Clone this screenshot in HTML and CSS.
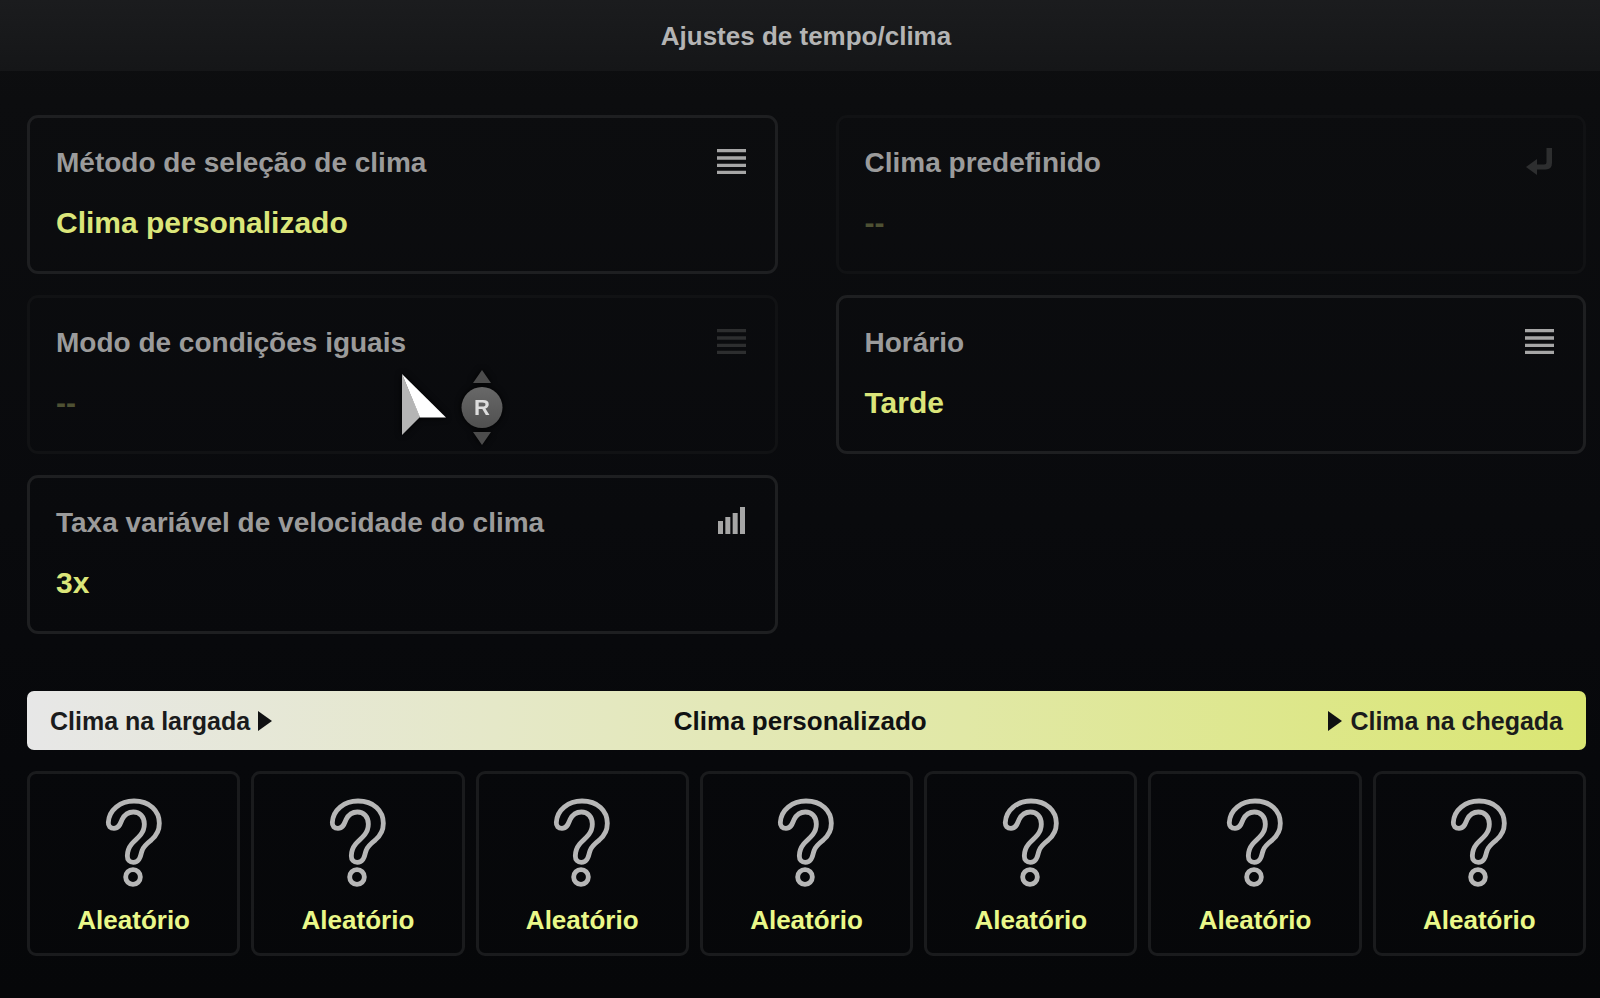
FILE: index.html
```html
<!DOCTYPE html>
<html lang="pt-BR">
<head>
<meta charset="utf-8">
<title>Ajustes de tempo/clima</title>
<link rel="stylesheet" href="styles.css">
</head>
<body>
<svg class="symbols" aria-hidden="true">
  <symbol id="list" viewBox="0 0 96 96"><path d="M3 6h87v10H3zM3 28h87v10H3zM3 50h87v10H3zM3 71h87v10H3z" fill="currentColor"/></symbol>
  <symbol id="bars" viewBox="0 0 96 96"><path d="M6 42h15v39H6zM28 30h15v51H28zM50 18h15v63H50zM72 0h15v81H72z" fill="currentColor"/></symbol>
  <symbol id="return" viewBox="0 0 32 32"><path d="M2 20L13 12v5.500h7q2.500 0 2.500-2.500V1H28v15q0 6.500-6.500 6.500H13V28z" fill="currentColor"/></symbol>
  <symbol id="question" viewBox="0 0 174 270">
    <g fill="none" stroke="currentColor" stroke-width="14.500">
      <path d="M10 73C12 36 45 9 87 9C134 9 163 38 163 76C163 98 156 112 139 126C125 137 117 143 112 156C107 168 108 176 102 184C97 191 91 193 85 193C74 193 67 186 67 174C67 160 71 149 80 138C90 126 99 121 107 110C115 100 118 90 118 78C118 56 104 42 85 42C67 42 58 51 51 65C46 76 43 91 27 91C16 91 9 84 10 73Z"/>
      <circle cx="84" cy="237" r="22"/>
    </g>
  </symbol>
  <symbol id="play" viewBox="0 0 14 20"><path d="M0 0L14 10L0 20z" fill="currentColor"/></symbol>
</svg>

<header class="header"><h1 class="title">Ajustes de tempo/clima</h1></header>

<main class="content">
  <section class="settings">
    <button class="card" type="button">
      <span class="label">Método de seleção de clima</span>
      <svg class="icon"><use href="#list"/></svg>
      <span class="value">Clima personalizado</span>
    </button>
    <button class="card" type="button" disabled>
      <span class="label">Clima predefinido</span>
      <svg class="icon"><use href="#return"/></svg>
      <span class="value">--</span>
    </button>
    <button class="card" type="button" disabled>
      <span class="label">Modo de condições iguais</span>
      <svg class="icon"><use href="#list"/></svg>
      <span class="value">--</span>
    </button>
    <button class="card" type="button">
      <span class="label">Horário</span>
      <svg class="icon"><use href="#list"/></svg>
      <span class="value">Tarde</span>
    </button>
    <button class="card" type="button">
      <span class="label">Taxa variável de velocidade do clima</span>
      <svg class="icon"><use href="#bars"/></svg>
      <span class="value">3x</span>
    </button>
  </section>

  <section class="forecast">
    <div class="timeline">
      <span class="edge">Clima na largada <svg class="play"><use href="#play"/></svg></span>
      <h2 class="timeline-title">Clima personalizado</h2>
      <span class="edge"><svg class="play"><use href="#play"/></svg> Clima na chegada</span>
    </div>
    <div class="slots">
      <button class="slot" type="button"><svg class="question"><use href="#question"/></svg>Aleatório</button>
      <button class="slot" type="button"><svg class="question"><use href="#question"/></svg>Aleatório</button>
      <button class="slot" type="button"><svg class="question"><use href="#question"/></svg>Aleatório</button>
      <button class="slot" type="button"><svg class="question"><use href="#question"/></svg>Aleatório</button>
      <button class="slot" type="button"><svg class="question"><use href="#question"/></svg>Aleatório</button>
      <button class="slot" type="button"><svg class="question"><use href="#question"/></svg>Aleatório</button>
      <button class="slot" type="button"><svg class="question"><use href="#question"/></svg>Aleatório</button>
    </div>
  </section>
</main>

<svg class="pointer" viewBox="0 0 108 84" aria-hidden="true">
  <defs>
    <linearGradient id="knob" x2="0" y2="1"><stop stop-color="#686868"/><stop offset="1" stop-color="#505050"/></linearGradient>
  </defs>
  <path class="pointer-shade" d="M2 8L20 51L2 69z"/>
  <path class="pointer-light" d="M2 8L46 51.500H20z"/>
  <circle cx="82" cy="41.500" r="20.500" fill="url(#knob)"/>
  <path class="pointer-arrow" d="M82 4L91 17H73zM73 66H91L82 79z"/>
  <text class="pointer-key" x="82" y="49" text-anchor="middle">R</text>
</svg>
</body>
</html>
```
FILE: styles.css
```css
* {
  box-sizing: border-box;
}

body {
  margin: 0;
  min-height: 100vh;
  position: relative;
  background: linear-gradient(#0e0f11 0, #0c0d0f 100px, #090a0d 520px, #07080b 760px, #060709 100%);
  font-family: "Liberation Sans", Arial, sans-serif;
  font-weight: bold;
}

.symbols {
  display: none;
}

.header {
  display: flex;
  align-items: center;
  justify-content: center;
  height: 71px;
  padding-left: 12px;
  background: linear-gradient(#1b1c1e, #151618);
}

.title {
  margin: 0;
  font-size: 26px;
  line-height: 32px;
  color: #b4b4b4;
}

.content {
  padding: 44px 14px 40px 27px;
}

.settings {
  display: grid;
  grid-template-columns: 1fr 1fr;
  gap: 21px 58px;
}

.card {
  display: grid;
  grid-template-columns: 1fr 32px;
  gap: 26px 16px;
  padding: 29px 27px 30px 26px;
  border: 3px solid #1e1f21;
  border-radius: 11px;
  background: none;
  font: inherit;
  text-align: left;
}

.label {
  font-size: 28px;
  line-height: 32px;
  color: #9b9b9b;
}

.icon {
  width: 32px;
  height: 32px;
  color: #a6a6a6;
}

.value {
  grid-column: 1 / -1;
  font-size: 30px;
  line-height: 36px;
  color: #dbe67a;
}

.card:disabled {
  border-color: #111214;
}

.card:disabled .icon {
  color: #2d2e2f;
}

.card:disabled .value {
  color: #4e5133;
}

.forecast {
  margin-top: 57px;
}

.timeline {
  display: flex;
  align-items: center;
  justify-content: space-between;
  height: 59px;
  padding: 0 23px;
  border-radius: 7px;
  background: linear-gradient(90deg, #e7e7e7, #e5e8c8 30%, #e1e8a6 60%, #dae673);
  color: #1a1b1c;
}

.timeline-title {
  margin: 0;
  font-size: 26px;
  line-height: 32px;
  color: #101112;
}

.edge {
  display: flex;
  align-items: center;
  gap: 8px;
  font-size: 25px;
  line-height: 32px;
}

.play {
  width: 14px;
  height: 20px;
  color: #101112;
}

.slots {
  display: grid;
  grid-template-columns: repeat(7, 1fr);
  gap: 11px;
  margin-top: 21px;
}

.slot {
  display: flex;
  flex-direction: column;
  align-items: center;
  gap: 16px;
  padding: 24px 0 17px;
  border: 3px solid #1a1b1d;
  border-radius: 9px;
  background: none;
  font: inherit;
  font-size: 26px;
  line-height: 32px;
  color: #eaf889;
}

.question {
  width: 58px;
  height: 90px;
  color: #b7b7b7;
}

.pointer {
  position: absolute;
  left: 400px;
  top: 366px;
  width: 108px;
  height: 84px;
  filter: drop-shadow(0 0 3px #000);
  pointer-events: none;
}

.pointer-shade {
  fill: #b5b5b5;
}

.pointer-light {
  fill: #fff;
}

.pointer-arrow {
  fill: #4c4c4c;
}

.pointer-key {
  fill: #dcdcdc;
  font-size: 22px;
}
```
